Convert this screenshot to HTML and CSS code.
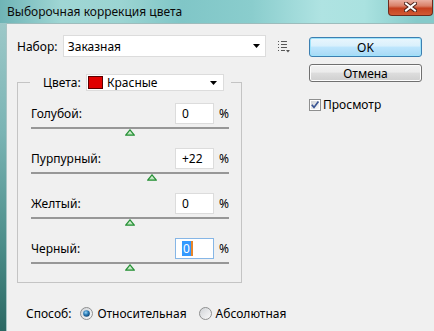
FILE: index.html
```html
<!DOCTYPE html>
<html lang="ru">
<head>
    <meta charset="UTF-8">
    <meta name="viewport" content="width=device-width, initial-scale=1.0">
    <title>Выборочная коррекция цвета</title>
    <link rel="stylesheet" href="styles.css">
</head>
<body>
    <div class="window">
        <div class="titlebar">
            <span class="title">Выборочная коррекция цвета</span>
            <span class="close">
                <svg width="13" height="10" viewBox="0 0 13 10">
                    <path d="M2 1.5 L11 8.5 M11 1.5 L2 8.5" stroke="#4a2118" stroke-width="4" stroke-linecap="square"/>
                    <path d="M2 1.5 L11 8.5 M11 1.5 L2 8.5" stroke="#fff" stroke-width="2" stroke-linecap="square"/>
                </svg>
            </span>
        </div>
        <div class="frame">
            <div class="client">
                <div class="main">
                    <div class="left">
                        <div class="preset-row">
                            <span class="preset-label">Набор:</span>
                            <div class="select preset">
                                <span class="value">Заказная</span>
                                <svg class="arrow" width="7" height="4" viewBox="0 0 7 4"><path d="M0 0 H7 L3.5 4 Z" fill="#000"/></svg>
                            </div>
                            <svg class="menu-icon" width="12" height="12" viewBox="0 0 12 12">
                                <g fill="#555">
                                    <rect x="0" y="0" width="1" height="1"/><rect x="3" y="0" width="6" height="1"/>
                                    <rect x="0" y="3" width="1" height="1"/><rect x="3" y="3" width="6" height="1"/>
                                    <rect x="0" y="6" width="1" height="1"/><rect x="3" y="6" width="6" height="1"/>
                                    <rect x="0" y="9" width="1" height="1"/><rect x="3" y="9" width="4" height="1"/>
                                    <path d="M8 9 H12 L10 11.5 Z"/>
                                </g>
                            </svg>
                        </div>
                        <fieldset class="group">
                            <legend class="legend">
                                <span>Цвета:</span>
                                <div class="select colors">
                                    <span class="swatch"></span>
                                    <span class="value">Красные</span>
                                    <svg class="arrow" width="7" height="4" viewBox="0 0 7 4"><path d="M0 0 H7 L3.5 4 Z" fill="#000"/></svg>
                                </div>
                            </legend>
                            <div class="slider-row">
                                <div class="field">
                                    <span class="name">Голубой:</span>
                                    <span class="num">0</span>
                                    <span class="pct">%</span>
                                </div>
                                <div class="track">
                                    <svg class="thumb" style="left: 50%" width="10" height="7" viewBox="0 0 10 7"><path d="M5 0.8 L9.3 6.2 H0.7 Z" fill="url(#tg)" stroke="#279137" stroke-width="1.3" stroke-linejoin="round"/></svg>
                                </div>
                            </div>
                            <div class="slider-row">
                                <div class="field">
                                    <span class="name">Пурпурный:</span>
                                    <span class="num">+22</span>
                                    <span class="pct">%</span>
                                </div>
                                <div class="track">
                                    <svg class="thumb" style="left: 61%" width="10" height="7" viewBox="0 0 10 7"><path d="M5 0.8 L9.3 6.2 H0.7 Z" fill="url(#tg)" stroke="#279137" stroke-width="1.3" stroke-linejoin="round"/></svg>
                                </div>
                            </div>
                            <div class="slider-row">
                                <div class="field">
                                    <span class="name">Желтый:</span>
                                    <span class="num">0</span>
                                    <span class="pct">%</span>
                                </div>
                                <div class="track">
                                    <svg class="thumb" style="left: 50%" width="10" height="7" viewBox="0 0 10 7"><path d="M5 0.8 L9.3 6.2 H0.7 Z" fill="url(#tg)" stroke="#279137" stroke-width="1.3" stroke-linejoin="round"/></svg>
                                </div>
                            </div>
                            <div class="slider-row">
                                <div class="field">
                                    <span class="name">Черный:</span>
                                    <span class="num focus"><span class="sel">0</span><span class="caret"></span></span>
                                    <span class="pct">%</span>
                                </div>
                                <div class="track">
                                    <svg class="thumb" style="left: 50%" width="10" height="7" viewBox="0 0 10 7"><path d="M5 0.8 L9.3 6.2 H0.7 Z" fill="url(#tg)" stroke="#279137" stroke-width="1.3" stroke-linejoin="round"/></svg>
                                </div>
                            </div>
                        </fieldset>
                    </div>
                    <div class="right">
                        <button type="button" class="btn ok">OK</button>
                        <button type="button" class="btn cancel">Отмена</button>
                        <div class="check-row">
                            <svg class="checkbox" width="12" height="12" viewBox="0 0 12 12">
                                <defs>
                                    <linearGradient id="cb" x1="0" y1="0" x2="1" y2="1">
                                        <stop offset="0" stop-color="#cfd2d6"/>
                                        <stop offset="1" stop-color="#fbfbfb"/>
                                    </linearGradient>
                                    <linearGradient id="tg" x1="0" y1="0" x2="0" y2="1">
                                        <stop offset="0" stop-color="#f4fbf4"/>
                                        <stop offset="1" stop-color="#a8dca8"/>
                                    </linearGradient>
                                </defs>
                                <rect x="0.5" y="0.5" width="11" height="11" fill="#fff" stroke="#8e8f8f"/>
                                <rect x="2" y="2" width="8" height="8" fill="url(#cb)"/>
                                <path d="M2.8 5.8 L5 8.4 L9.4 2.6" fill="none" stroke="#3b5694" stroke-width="1.7"/>
                            </svg>
                            <span>Просмотр</span>
                        </div>
                    </div>
                </div>
                <div class="method">
                    <span class="method-label">Способ:</span>
                    <svg class="radio" width="13" height="13" viewBox="0 0 13 13">
                        <defs>
                            <radialGradient id="rdot" cx="0.4" cy="0.35" r="0.7">
                                <stop offset="0" stop-color="#9ad6f5"/>
                                <stop offset="0.5" stop-color="#2a7cb8"/>
                                <stop offset="1" stop-color="#0f3f6b"/>
                            </radialGradient>
                            <linearGradient id="rbg" x1="0" y1="0" x2="1" y2="1">
                                <stop offset="0" stop-color="#cfd2d6"/>
                                <stop offset="1" stop-color="#fcfcfc"/>
                            </linearGradient>
                        </defs>
                        <circle cx="6.5" cy="6.5" r="6" fill="url(#rbg)" stroke="#8e8f8f"/>
                        <circle cx="6.5" cy="6.5" r="3.3" fill="url(#rdot)"/>
                    </svg>
                    <span class="option">Относительная</span>
                    <svg class="radio" width="13" height="13" viewBox="0 0 13 13">
                        <circle cx="6.5" cy="6.5" r="6" fill="url(#rbg)" stroke="#8e8f8f"/>
                    </svg>
                    <span class="option">Абсолютная</span>
                </div>
            </div>
        </div>
    </div>
</body>
</html>
```

FILE: styles.css
```css
body{
    margin: 0;
    font-family: "Noto Sans", "DejaVu Sans", sans-serif;
    font-size: 12px;
    color: #000;
}
.window{
    width: 434px; height: 331px; overflow: hidden;
    display: flex; flex-direction: column;
    background: linear-gradient(#a4cccc, #7ab4b4 40%, #4a8c88 75%, #2b6863);
}
.titlebar{
    height: 23px; display: flex; justify-content: space-between; align-items: flex-start;
    background: linear-gradient(90deg, #6fb4b6 0%, #9fd6d4 14%, #9bd4d2 28%, #80c6c7 42%, #8acdcd 58%, #afe3e2 74%, #aae2e0 84%, #86caca 96%);
}
.title{
    padding: 4px 0 0 7px; line-height: 16px; color: #0a0a0a;
}
.close{
    width: 45px; height: 16px; margin-right: 1px; box-sizing: border-box;
    border: 1px solid #6d2b1e; border-top: none; border-radius: 0 0 4px 4px;
    background: linear-gradient(#eab0a2, #d98068 40%, #c5401f 55%, #d25a34);
    display: flex; justify-content: center; padding-top: 2px;
}
.frame{
    flex: 1; display: flex; padding-left: 6px;
}
.client{
    flex: 1; background: #f0f0f0;
    border-top: 1px solid #9dbcbc; border-left: 1px solid #a8c4c4;
    padding: 11px 0 0 10px;
}
.main{
    display: flex;
}
.left{
    width: 273px;
}
.right{
    width: 113px; margin-left: 19px; padding-top: 2px;
}
.preset-row{
    display: flex; align-items: center; height: 22px;
}
.preset-label{
    width: 46px;
}
.select{
    display: flex; align-items: center; box-sizing: border-box;
    background: #fff; border: 1px solid #dcdcdc;
}
.select .value{
    flex: 1;
}
.preset{
    width: 204px; height: 22px; padding: 0 5px 0 4px;
}
.menu-icon{
    margin-left: 12px; margin-top: 2px;
}
.group{
    width: 225px; box-sizing: border-box; min-width: 0;
    margin: 17px 0 0; padding: 12px 12px 11px 13px;
    border: 1px solid #c4c4c4;
}
.legend{
    display: flex; justify-content: space-between; align-items: center;
    width: 201px; height: 17px; box-sizing: border-box;
    margin-left: -1px; padding: 0 7px 0 13px;
}
.colors{
    width: 138px; height: 17px; padding: 0 6px 0 1px;
}
.swatch{
    width: 13px; height: 11px; margin-right: 4px;
    background: #e00000; border: 1px solid #5a0000;
}
.slider-row{
    height: 45px;
}
.slider-row:last-child{
    height: 33px;
}
.field{
    display: flex; align-items: center; height: 21px;
}
.field .name{
    flex: 1;
}
.num{
    width: 39px; height: 21px; box-sizing: border-box;
    display: flex; align-items: center; padding-left: 6px;
    background: #fff; border: 1px solid #dcdcdc;
}
.num.focus{
    border-color: #86b6e6;
}
.sel{
    background: #3399ff; color: #fff; line-height: 15px; padding: 0 1px;
}
.caret{
    width: 2px; height: 15px; background: #e8862a;
}
.pct{
    width: 10px; margin-left: 5px;
}
.track{
    position: relative; height: 2px; margin-top: 3px;
    background: #979797;
}
.thumb{
    position: absolute; top: 2px; margin-left: -5px;
}
.btn{
    display: block; width: 113px; box-sizing: border-box; padding: 0;
    font: inherit; color: #000; border-radius: 3px;
}
.ok{
    height: 20px;
    border: 1px solid #3c7fb1;
    background: linear-gradient(#eaf6fd, #d9f0fc 45%, #bee6fd 50%, #a7d9f5);
    box-shadow: inset 0 0 0 1px #9ee3fb;
}
.cancel{
    height: 18px; margin-top: 7px;
    border: 1px solid #707070;
    background: linear-gradient(#f2f2f2, #ebebeb 45%, #dddddd 50%, #cfcfcf);
    box-shadow: inset 0 0 0 1px #fcfcfc;
}
.check-row{
    display: flex; align-items: center; height: 13px; margin-top: 16px;
}
.checkbox{
    margin-right: 2px;
}
.method{
    display: flex; align-items: center; height: 16px;
    margin: 22px 0 0 9px;
}
.method-label{
    margin-right: 9px;
}
.radio{
    margin-right: 4px;
}
.option{
    margin-right: 12px;
}
```
